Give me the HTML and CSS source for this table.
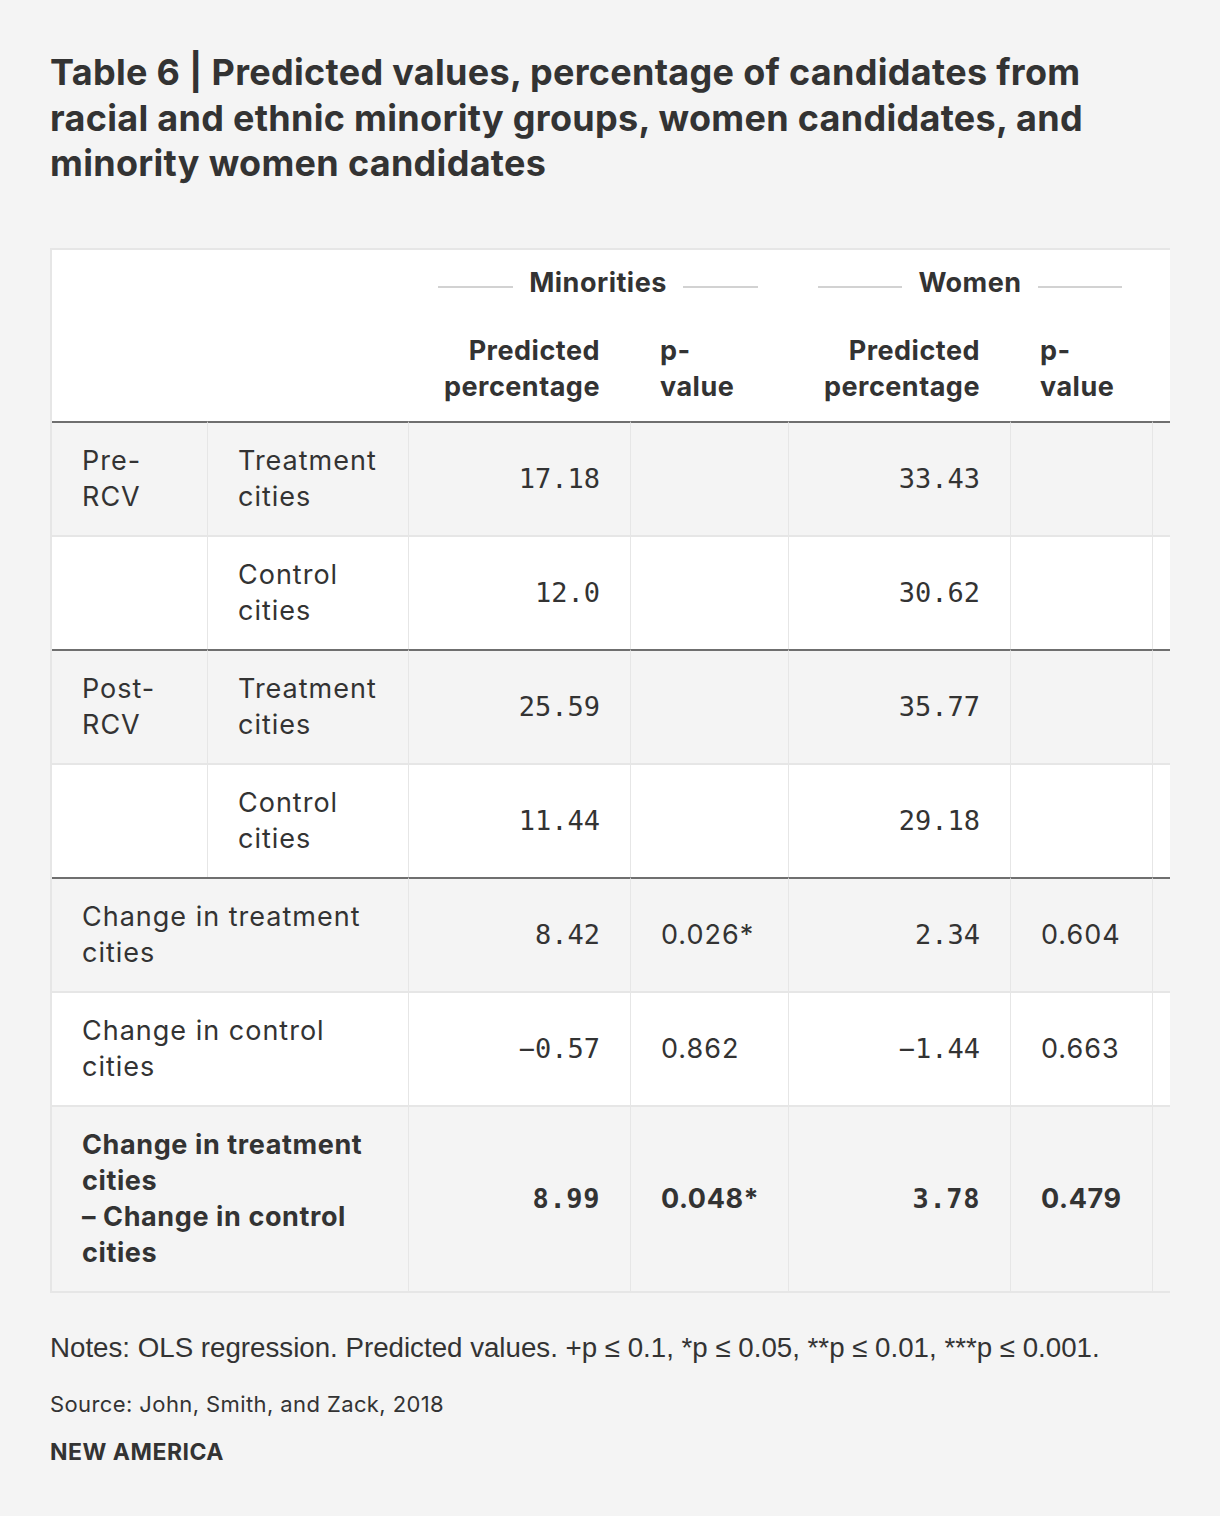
FILE: index.html
```html
<!DOCTYPE html>
<html lang="en">
<head>
<meta charset="utf-8">
<title>Table 6</title>
<link rel="stylesheet" href="styles.css">
</head>
<body>
<main class="figure">
  <h1 class="title">Table 6 | Predicted values, percentage of candidates from racial and ethnic minority groups, women candidates, and minority women candidates</h1>

  <div class="table-scroll">
    <table class="data">
      <colgroup>
        <col class="c1"><col class="c2"><col class="c3"><col class="c4"><col class="c5"><col class="c6"><col class="c7"><col class="c8">
      </colgroup>
      <thead>
        <tr class="group-row">
          <th colspan="2"></th>
          <th colspan="2"><div class="group"><span>Minorities</span></div></th>
          <th colspan="2"><div class="group"><span>Women</span></div></th>
          <th colspan="2"></th>
        </tr>
        <tr class="sub-row">
          <th colspan="2"></th>
          <th class="num">Predicted percentage</th>
          <th class="pv">p-<br>value</th>
          <th class="num">Predicted percentage</th>
          <th class="pv">p-<br>value</th>
          <th class="num"></th>
          <th class="pv"></th>
        </tr>
      </thead>
      <tbody>
        <tr class="shade">
          <td>Pre-<br>RCV</td>
          <td>Treatment cities</td>
          <td class="num">17.18</td><td></td>
          <td class="num">33.43</td><td></td>
          <td class="num"></td><td></td>
        </tr>
        <tr>
          <td></td>
          <td>Control cities</td>
          <td class="num">12.0</td><td></td>
          <td class="num">30.62</td><td></td>
          <td class="num"></td><td></td>
        </tr>
      </tbody>
      <tbody>
        <tr class="shade">
          <td>Post-<br>RCV</td>
          <td>Treatment cities</td>
          <td class="num">25.59</td><td></td>
          <td class="num">35.77</td><td></td>
          <td class="num"></td><td></td>
        </tr>
        <tr>
          <td></td>
          <td>Control cities</td>
          <td class="num">11.44</td><td></td>
          <td class="num">29.18</td><td></td>
          <td class="num"></td><td></td>
        </tr>
      </tbody>
      <tbody>
        <tr class="shade">
          <td colspan="2">Change in treatment cities</td>
          <td class="num">8.42</td><td>0.026*</td>
          <td class="num">2.34</td><td>0.604</td>
          <td class="num"></td><td></td>
        </tr>
        <tr>
          <td colspan="2">Change in control cities</td>
          <td class="num">−0.57</td><td>0.862</td>
          <td class="num">−1.44</td><td>0.663</td>
          <td class="num"></td><td></td>
        </tr>
        <tr class="shade total">
          <td colspan="2">Change in treatment cities<br>– Change in control cities</td>
          <td class="num">8.99</td><td>0.048*</td>
          <td class="num">3.78</td><td>0.479</td>
          <td class="num"></td><td></td>
        </tr>
      </tbody>
    </table>
  </div>

  <p class="notes">Notes: OLS regression. Predicted values. +p ≤ 0.1, *p ≤ 0.05, **p ≤ 0.01, ***p ≤ 0.001.</p>
  <p class="source">Source: John, Smith, and Zack, 2018</p>
  <p class="brand">NEW AMERICA</p>
</main>
</body>
</html>
```

FILE: styles.css
```css
html, body {
  margin: 0;
  padding: 0;
  background: #f4f4f4;
}

body {
  color: #333333;
  font-family: Inter, "Noto Sans", sans-serif;
}

.figure {
  padding: 50px 50px 40px 50px;
}

.title {
  margin: 0;
  font-size: 36px;
  line-height: 45.5px;
  font-weight: 700;
  color: #333333;
  letter-spacing: 0.3px;
}

.table-scroll {
  margin-top: 61px;
  width: 1120px;
  overflow: hidden;
}

.data {
  border-collapse: separate;
  border-spacing: 0;
  table-layout: fixed;
  width: 1482px;
  border-top: 2px solid #e6e6e6;
  border-left: 2px solid #e6e6e6;
  border-bottom: 2px solid #e6e6e6;
  font-size: 27px;
  line-height: 36px;
  letter-spacing: 1px;
}

.c1 { width: 155px; }
.c2 { width: 201px; }
.c3 { width: 222px; }
.c4 { width: 158px; }
.c5 { width: 222px; }
.c6 { width: 142px; }
.c7 { width: 222px; }
.c8 { width: 158px; }

thead th {
  background: #ffffff;
  font-weight: 700;
  text-align: left;
  padding: 0 30px;
  letter-spacing: 0.5px;
}

.group-row th {
  padding-top: 15px;
  padding-bottom: 14px;
  height: 36px;
}

.sub-row th {
  padding-top: 18px;
  padding-bottom: 16px;
  vertical-align: bottom;
}

.group {
  display: flex;
  align-items: center;
  gap: 16px;
}

.group::before,
.group::after {
  content: "";
  flex: 1;
  height: 2px;
  background: #d2d2d2;
  margin-top: 8px;
}

.group span {
  white-space: nowrap;
}

th.num { text-align: right; }
th.pv { text-align: left; }

tbody td {
  background: #ffffff;
  padding: 20px 30px;
  border-top: 2px solid #e6e6e6;
  vertical-align: middle;
  font-weight: 400;
}

tbody tr.shade td {
  background: #f4f4f4;
}

tbody tr:first-child td {
  border-top: 2px solid #6f6f6f;
}

tbody td + td {
  border-left: 1px solid #e6e6e6;
}

td.num {
  text-align: right;
  font-family: "DejaVu Sans Mono", "Liberation Mono", monospace;
  font-size: 27px;
  letter-spacing: 0;
}

tr.total td {
  font-weight: 700;
  letter-spacing: 0.6px;
}

.notes {
  margin: 37px 0 0 0;
  font-family: "Liberation Sans", Arial, sans-serif;
  font-size: 27.7px;
  line-height: 36px;
}

.source {
  margin: 24px 0 0 0;
  font-size: 22px;
  line-height: 28px;
  letter-spacing: 0.4px;
}

.brand {
  margin: 20px 0 0 0;
  font-size: 23px;
  line-height: 28px;
  font-weight: 700;
  letter-spacing: 0.5px;
}
```
